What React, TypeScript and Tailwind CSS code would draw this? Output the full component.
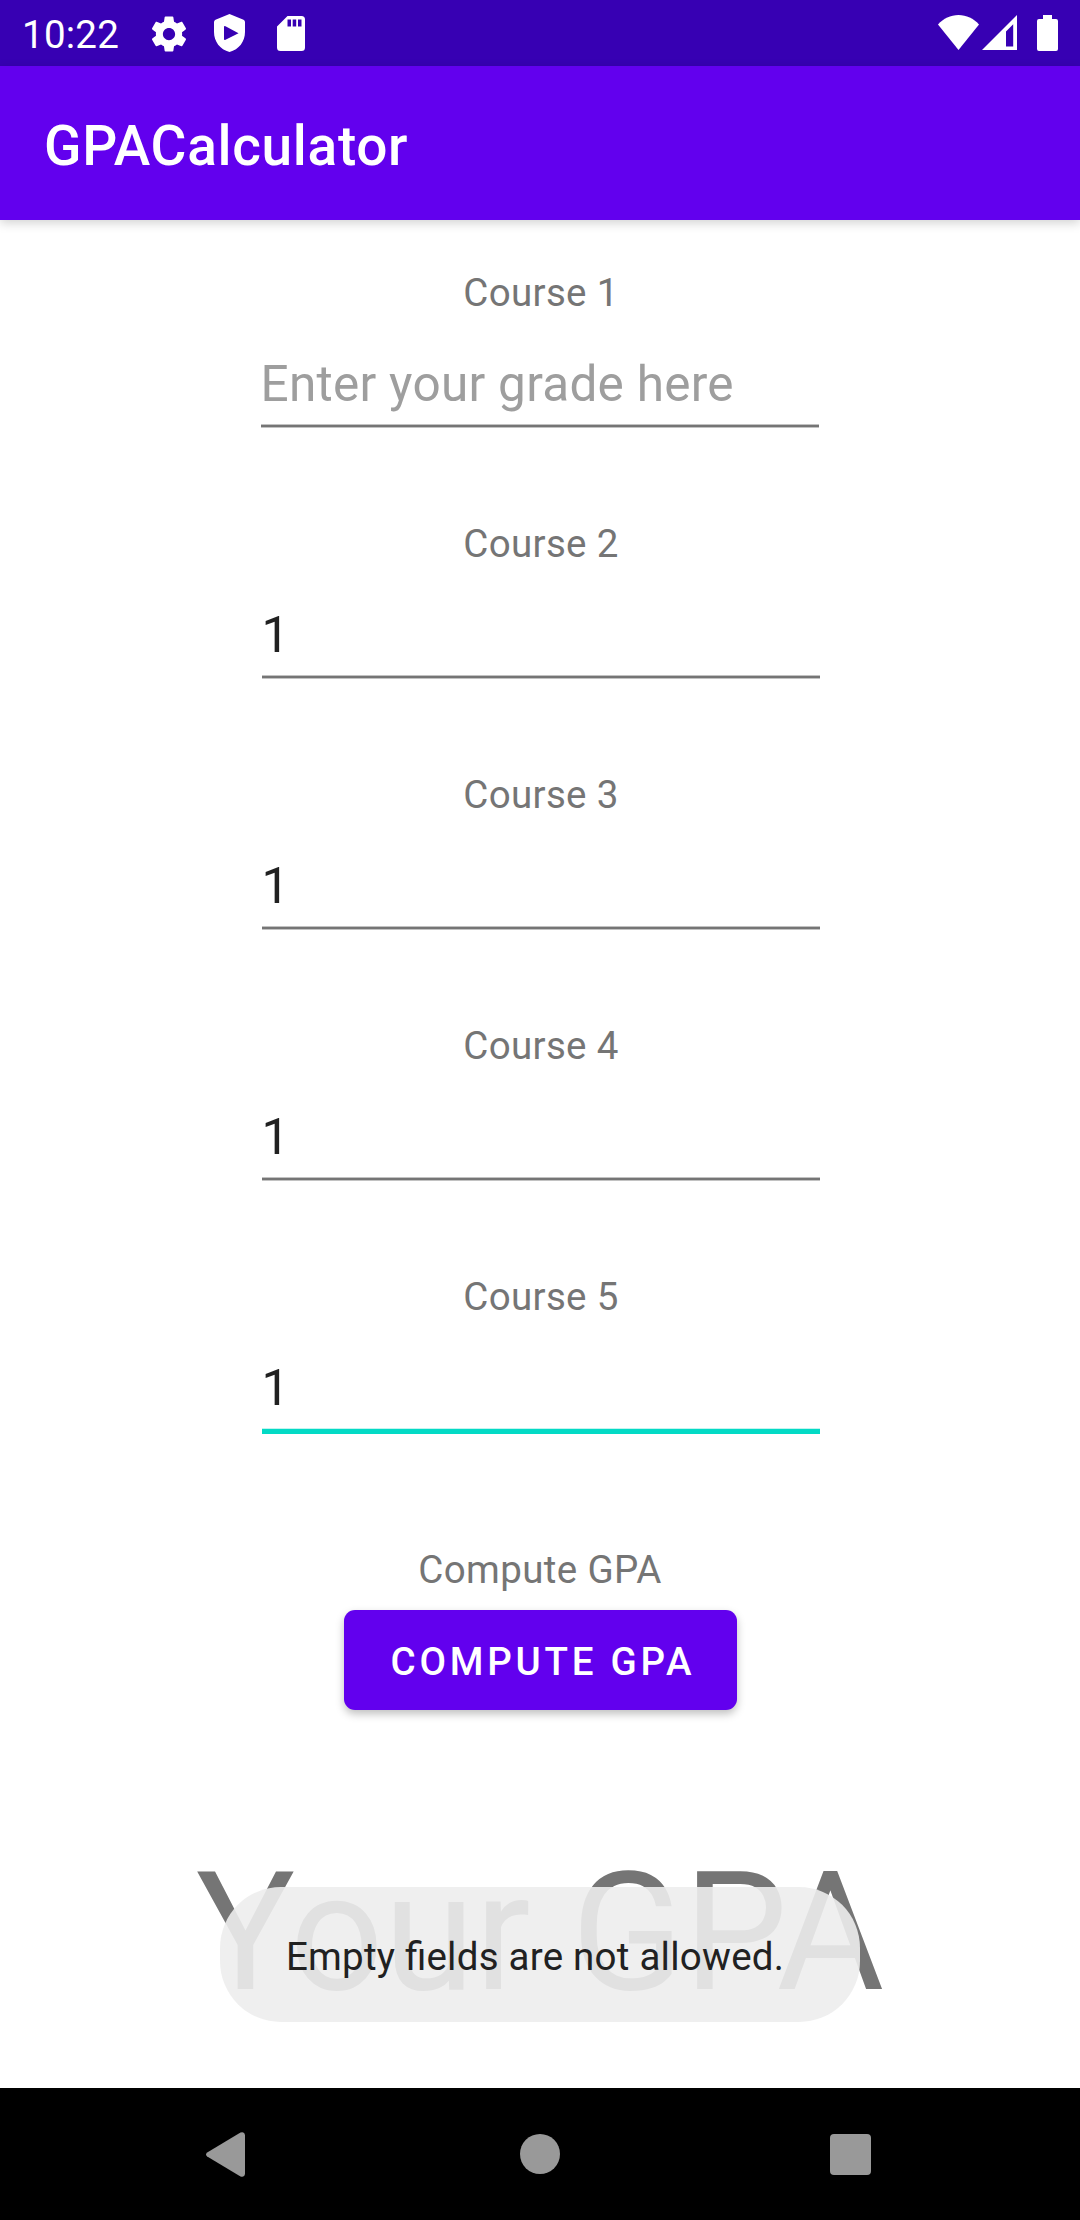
import React from "react";

type Course = { name: string; value: string; focused?: boolean };

const courses: Course[] = [
  { name: "Course 1", value: "" },
  { name: "Course 2", value: "1" },
  { name: "Course 3", value: "1" },
  { name: "Course 4", value: "1" },
  { name: "Course 5", value: "1", focused: true },
];

function StatusBar() {
  return (
    <div className="flex h-[66px] items-start justify-between bg-[#3700b3] text-white">
      <div className="flex items-start">
        <span className="ml-[22px] mt-3 w-[97px] text-[38.5px] leading-[45px] tracking-[0.25px] whitespace-nowrap">10:22</span>
        <svg className="ml-[28.5px] mt-[12.5px] size-[42px]" viewBox="0 0 24 24" fill="currentColor">
          <path d="M19.43 12.98c.04-.32.07-.64.07-.98s-.03-.66-.07-.98l2.11-1.65c.19-.15.24-.42.12-.64l-2-3.46c-.12-.22-.39-.3-.61-.22l-2.49 1c-.52-.4-1.08-.73-1.69-.98l-.38-2.65C14.46 2.18 14.25 2 14 2h-4c-.25 0-.46.18-.49.42l-.38 2.65c-.61.25-1.17.59-1.69.98l-2.49-1c-.23-.09-.49 0-.61.22l-2 3.46c-.13.22-.07.49.12.64l2.11 1.65c-.04.32-.07.65-.07.98s.03.66.07.98l-2.11 1.65c-.19.15-.24.42-.12.64l2 3.46c.12.22.39.3.61.22l2.49-1c.52.4 1.08.73 1.69.98l.38 2.65c.03.24.24.42.49.42h4c.25 0 .46-.18.49-.42l.38-2.65c.61-.25 1.17-.59 1.69-.98l2.49 1c.23.09.49 0 .61-.22l2-3.46c.12-.22.07-.49-.12-.64l-2.11-1.65zM12 15.5c-1.93 0-3.5-1.57-3.5-3.5s1.57-3.5 3.5-3.5 3.5 1.57 3.5 3.5-1.57 3.5-3.5 3.5z" />
        </svg>
        <svg className="ml-[24px] mt-[14px] h-[38px] w-[31px]" viewBox="0 0 31 38" fill="currentColor" fillRule="evenodd">
          <path d="M15.5 0 29.500 5.800Q31 6.500 31 8V18c0 9.500-6 17.500-15.500 20C6 35.500 0 27.500 0 18V8Q0 6.500 1.500 5.800zM10 13V25Q10 26.500 11.500 25.800L24.500 19.200 11.500 12.300Q10 11.500 10 13z" />
        </svg>
        <svg className="ml-[32px] mt-[16px] h-[35px] w-[28px]" viewBox="0 0 28 35" fill="currentColor" fillRule="evenodd">
          <path d="M10.500 0H24.500A3.500 3.500 0 0 1 28 3.500V31.500A3.500 3.500 0 0 1 24.500 35H3.500A3.500 3.500 0 0 1 0 31.500V10.500zM10.500 3.500v7h3.500v-7zM15.700 3.500v7h3.500v-7zM21 3.500v7h3.500v-7z" />
        </svg>
      </div>
      <div className="flex items-start">
        <svg className="mt-[15px] h-[35px] w-[41px]" viewBox="0 0 41 35" fill="currentColor">
          <path d="M0 9.500C5.500 3.500 12.500 0 20.500 0S35.500 3.500 41 9.500L20.500 35z" />
        </svg>
        <svg className="ml-[3px] mt-[15px] h-[35px] w-[35px]" viewBox="0 0 35 35" fill="currentColor" fillRule="evenodd">
          <path d="M35 0V35H0zM31.200 9.200 24 16.500V31.500h7.200z" />
        </svg>
        <svg className="mr-[22px] ml-[20px] mt-[15px] h-[36px] w-[21px]" viewBox="0 0 21 36" fill="currentColor">
          <path d="M6 0h9v4h4a2 2 0 0 1 2 2v28a2 2 0 0 1-2 2H2a2 2 0 0 1-2-2V6a2 2 0 0 1 2-2h4z" />
        </svg>
      </div>
    </div>
  );
}

function CourseField({ course }: { course: Course }) {
  return (
    <div className="flex h-[251px] flex-col items-center">
      <span className="pl-[2px] text-[38.5px] leading-[45px] tracking-[0.33px] text-[#757575]">{course.name}</span>
      <div className={course.value ? "ml-px mt-10 w-[558px]" : "mr-px mt-10 w-[558px]"}>
        <div className={course.value ? "h-[69px] text-[49.5px] leading-[58px] text-[#212121]" : "h-[69px] text-[49.5px] leading-[58px] tracking-[0.27px] whitespace-nowrap text-[#9e9e9e]"}>
          {course.value || "Enter your grade here"}
        </div>
        {course.focused ? (
          <div className="h-[6px] border-t border-[#c0f5f0] bg-[#03dac5]" />
        ) : (
          <div className="h-[4px] border-y border-[#c2c2c2] bg-[#757575]" />
        )}
      </div>
    </div>
  );
}

function NavigationBar() {
  return (
    <div className="flex h-[132px] items-start bg-black text-[#999999]">
      <svg className="ml-[206px] mt-[44px] h-[45px] w-[39px]" viewBox="0 0 39 45" fill="currentColor">
        <path d="M1.200 20.500 34.500 .600Q38.500-.800 39 3V42Q38.500 45.800 34.500 44.400L1.200 24.500Q-1.200 22.500 1.200 20.500z" />
      </svg>
      <div className="ml-[275px] mt-[46px] size-[40px] rounded-full bg-[#999999]" />
      <div className="ml-[270px] mt-[46px] size-[41px] rounded-[4px] bg-[#999999]" />
    </div>
  );
}

export default function App() {
  return (
    <div className="relative flex h-[2220px] w-[1080px] flex-col overflow-hidden bg-white font-['Roboto',sans-serif]">
      <StatusBar />
      <header className="flex h-[154px] items-center bg-[#6200ee] pl-11 text-[55px] leading-[64px] font-medium tracking-[0.68px] text-white shadow-[0_3px_10px_rgba(0,0,0,0.18)]">
        <h1 className="mt-[6px]">GPACalculator</h1>
      </header>
      <main className="flex flex-1 flex-col pt-[50px]">
        {courses.map((course) => (
          <CourseField key={course.name} course={course} />
        ))}
        <div className="mt-[22px] flex flex-col items-center">
          <span className="text-[38.5px] leading-[45px] tracking-[0.38px] text-[#757575]">Compute GPA</span>
          <button className="mt-[18px] ml-px h-[100px] w-[393px] rounded-[11px] bg-[#6200ee] pt-[2px] pl-[5px] text-[38.5px] leading-[45px] font-medium tracking-[3.77px] whitespace-nowrap text-white shadow-[0_4px_8px_rgba(0,0,0,0.25)]">
            COMPUTE GPA
          </button>
          <div className="mt-[126px] text-[165px] leading-[193px] tracking-[-0.1px] whitespace-nowrap text-[#757575]">Your GPA</div>
        </div>
      </main>
      <NavigationBar />
      <div className="absolute top-[1887px] left-[220px] flex h-[135px] w-[640px] items-center rounded-[61px] bg-[#ededed]/90 pl-[66px] text-[38.5px] leading-[45px] tracking-[0.24px] whitespace-nowrap text-[#212121]">
        <span className="mt-1">
          Empty <span className="tracking-normal">fi</span>elds are not allowed.
        </span>
      </div>
    </div>
  );
}
